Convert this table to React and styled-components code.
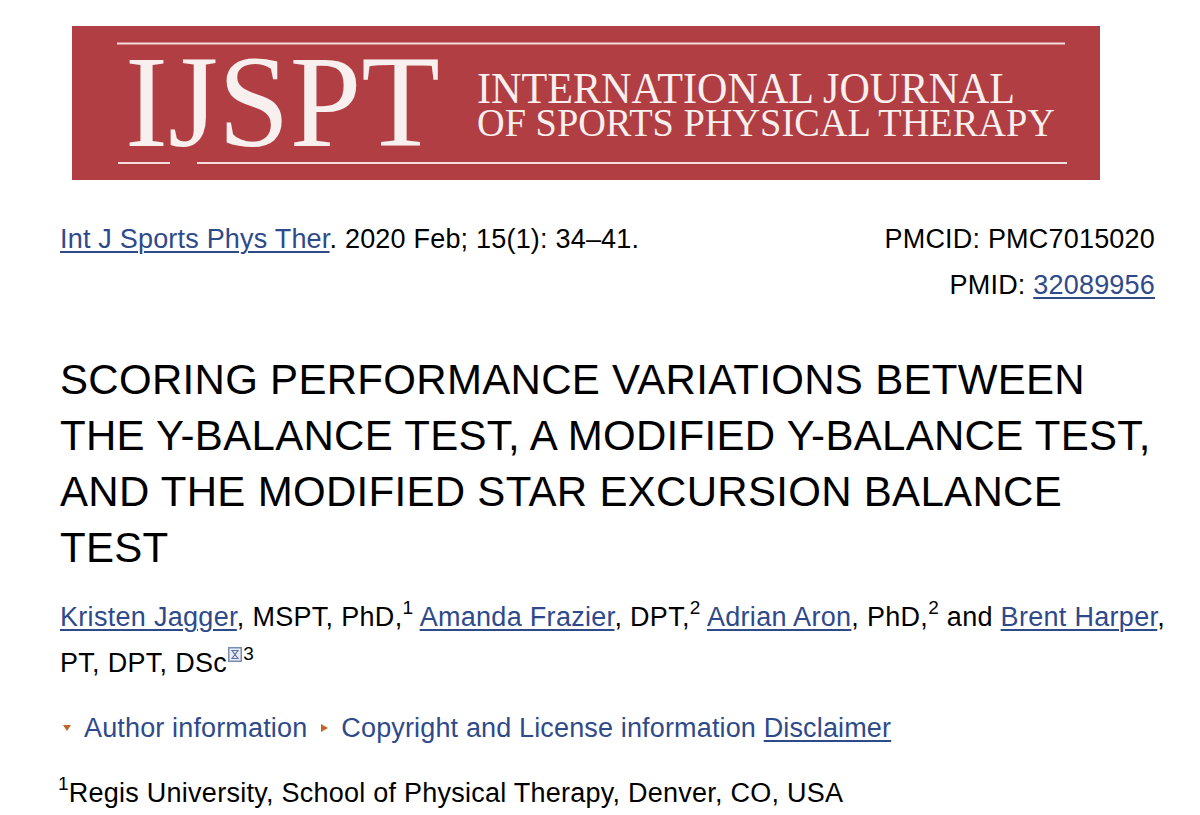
import React from "react";
import styled, { createGlobalStyle } from "styled-components";

const GlobalStyle = createGlobalStyle`
  body {
    margin: 0;
    background: #fff;
    color: #000;
    font-family: "Liberation Sans", Arial, Helvetica, sans-serif;
  }
`;

const LINK = "#2f4a8b";
const ACCENT = "#c0642b";

const Page = styled.main`
  padding: 26px 30px 0 60px;
`;

const Banner = styled.header`
  margin-left: 12px;
  width: 1028px;
  height: 154px;
  background: #b03e42;

  svg {
    display: block;
  }
`;

const MetaRow = styled.div`
  display: flex;
  justify-content: space-between;
  margin-top: 36px;
  font-size: 27px;
  letter-spacing: 0.2px;
  line-height: 46px;
`;

const Ids = styled.div`
  margin-right: 15px;
  text-align: right;
`;

const Title = styled.h1`
  margin: 44px 0 0;
  max-width: 1112px;
  font-size: 42px;
  font-weight: normal;
  letter-spacing: 0.3px;
  line-height: 56px;
`;

const Authors = styled.p`
  margin: 18px 0 0;
  max-width: 1120px;
  font-size: 27px;
  letter-spacing: 0.3px;
  line-height: 46px;
`;

const Link = styled.a`
  color: ${LINK};
  text-decoration: underline;
  text-decoration-thickness: 1.5px;
  text-underline-offset: 3px;
`;

const Sup = styled.sup`
  font-size: 19px;
  line-height: 0;
  vertical-align: 12px;
`;

const Tofu = styled.svg`
  width: 14px;
  height: 15px;
  margin: 0 1px;
  vertical-align: -2px;
`;

const InfoRow = styled.div`
  display: flex;
  align-items: center;
  margin-top: 19px;
  font-size: 27px;
  letter-spacing: 0.15px;
  line-height: 46px;
  color: ${LINK};
`;

const Triangle = styled.span`
  display: inline-block;
  width: 0;
  height: 0;
  margin: 0 13px 0 ${(p) => (p.$first ? "3px" : "14px")};
  ${(p) =>
    p.$dir === "down"
      ? `border-left: 4px solid transparent;
         border-right: 4px solid transparent;
         border-top: 6px solid ${ACCENT};`
      : `border-top: 4.5px solid transparent;
         border-bottom: 4.5px solid transparent;
         border-left: 7px solid ${ACCENT};`}
`;

const Toggle = styled.span`
  color: ${LINK};
`;

const Affiliation = styled.p`
  margin: 19px 0 0 -2px;
  font-size: 27px;
  letter-spacing: 0.25px;
  line-height: 46px;
`;

const Logo = () => (
  <svg width="1028" height="154" viewBox="0 0 1028 154">
    <g stroke="#f3dcdc" strokeWidth="2">
      <line x1="45" y1="17.5" x2="993" y2="17.5" />
      <line x1="46" y1="137" x2="98" y2="137" />
      <line x1="125" y1="137" x2="995" y2="137" />
    </g>
    <g fill="#f8efef" fontFamily='"Liberation Serif", "DejaVu Serif", serif'>
      <text x="53" y="120" fontSize="132" textLength="315" lengthAdjust="spacingAndGlyphs">
        IJSPT
      </text>
      <text x="405" y="77" fontSize="45" textLength="538" lengthAdjust="spacingAndGlyphs">
        INTERNATIONAL JOURNAL
      </text>
      <text x="405" y="110" fontSize="39" textLength="578" lengthAdjust="spacingAndGlyphs">
        OF SPORTS PHYSICAL THERAPY
      </text>
    </g>
  </svg>
);

export default function App() {
  return (
    <>
      <GlobalStyle />
      <Page>
        <Banner>
          <Logo />
        </Banner>

        <MetaRow>
          <div>
            <Link href="#">Int J Sports Phys Ther</Link>. 2020 Feb; 15(1): 34–41.
          </div>
          <Ids>
            <div>PMCID: PMC7015020</div>
            <div>
              PMID: <Link href="#">32089956</Link>
            </div>
          </Ids>
        </MetaRow>

        <Title>
          SCORING PERFORMANCE VARIATIONS BETWEEN THE Y-BALANCE TEST, A MODIFIED
          Y-BALANCE TEST, AND THE MODIFIED STAR EXCURSION BALANCE TEST
        </Title>

        <Authors>
          <Link href="#">Kristen Jagger</Link>, MSPT, PhD,<Sup>1</Sup>{" "}
          <Link href="#">Amanda Frazier</Link>, DPT,<Sup>2</Sup>{" "}
          <Link href="#">Adrian Aron</Link>, PhD,<Sup>2</Sup> and{" "}
          <Link href="#">Brent Harper</Link>, PT, DPT, DSc
          <Sup>
            <Tofu viewBox="0 0 14 15">
              <rect x="0.75" y="0.75" width="12.5" height="13.5" fill="#e8ecf4" stroke="#7b8db3" strokeWidth="1.5" />
              <path d="M4 3.5 H10 L7 7.5 L10 11.5 H4 L7 7.5 Z" fill="none" stroke="#5f74a3" strokeWidth="1.2" />
            </Tofu>
            3
          </Sup>
        </Authors>

        <InfoRow>
          <Triangle $dir="down" $first />
          <Toggle>Author information</Toggle>
          <Triangle $dir="right" />
          <Toggle>Copyright and License information</Toggle>
          &nbsp;<Link href="#">Disclaimer</Link>
        </InfoRow>

        <Affiliation>
          <Sup>1</Sup>Regis University, School of Physical Therapy, Denver, CO, USA
        </Affiliation>
      </Page>
    </>
  );
}
